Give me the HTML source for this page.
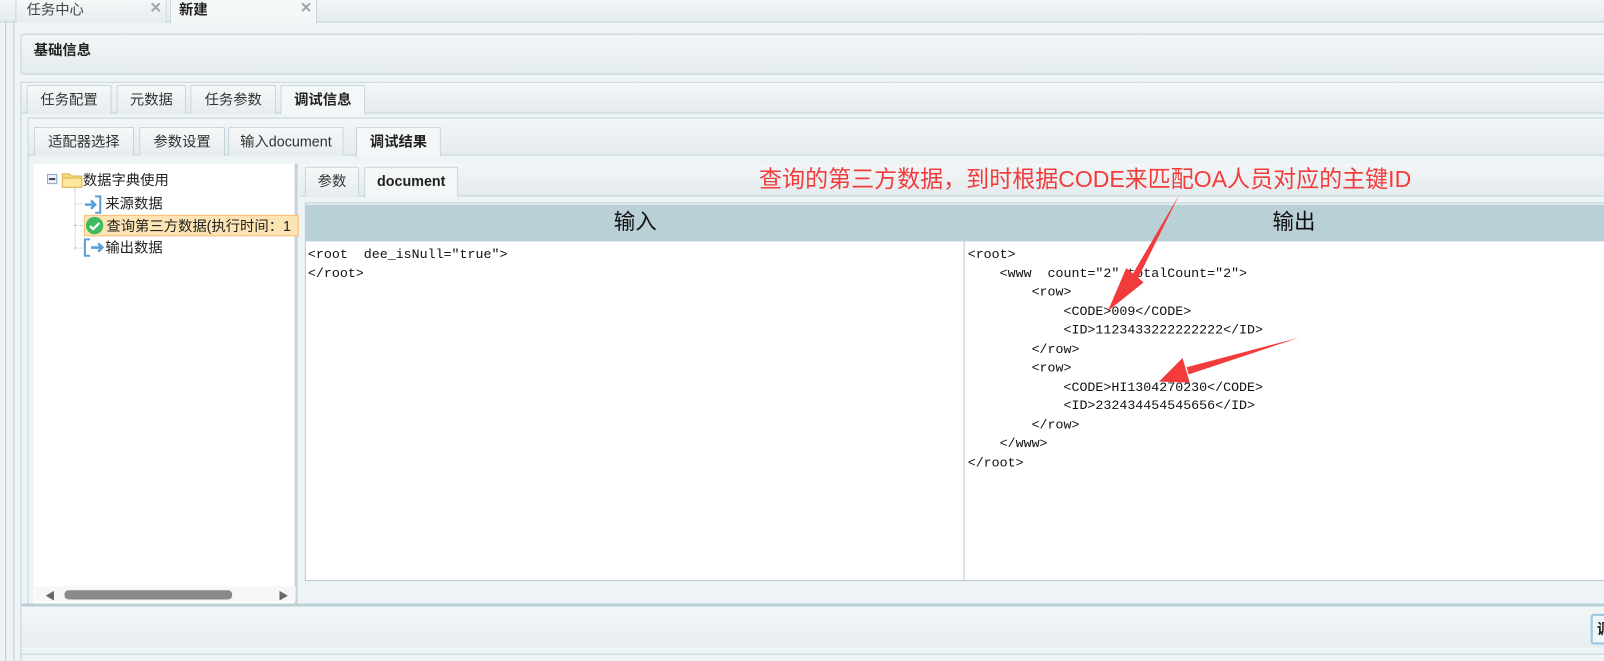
<!DOCTYPE html>
<html><head><meta charset="utf-8">
<style>
*{margin:0;padding:0;box-sizing:border-box}
body{width:1604px;height:646px;overflow:hidden;background:#eef3f5;font-family:"Liberation Sans","Noto Sans CJK SC",sans-serif;font-size:14px;color:#222;position:relative}
#w{position:absolute;left:0;top:0;width:1568px;height:632px;transform:scale(1.02296);transform-origin:0 0}
.abs{position:absolute}
.grad{background:linear-gradient(#f3f6f7,#e4ebee)}
.tab{position:absolute;border:1px solid #c3d3d9;border-bottom:none;background:linear-gradient(#f6f8f9,#e6ecef);font-size:14px;color:#333;text-align:center;border-radius:2px 2px 0 0}
.tab.act{background:#f4f7f8;font-weight:bold;color:#222}
.mono{font-family:"Liberation Mono","Noto Sans CJK SC",monospace;font-size:13px;line-height:18.5px;white-space:pre;color:#111}
</style></head><body><div id="w">
<div class="abs" style="left:0;top:0;width:1604px;height:646px;background:#eef3f5"></div>
<div class="abs grad" style="left:0;top:0;width:1604px;height:22px;border-bottom:1px solid #c3d3d9"></div>
<div class="tab" style="left:15px;top:-2px;width:148px;height:24px;line-height:20px;text-align:left;padding-left:10px;color:#444">任务中心<span class="abs" style="right:4px;top:-2px;color:#9aa7ad;font-size:14px;font-weight:bold">✕</span></div>
<div class="tab act" style="left:166px;top:-2px;width:144px;height:25px;line-height:20px;text-align:left;padding-left:8px;background:#f4f7f8">新建<span class="abs" style="right:4px;top:-2px;color:#9aa7ad;font-size:14px;font-weight:bold">✕</span></div>
<div class="abs" style="left:5px;top:22px;width:1px;height:624px;background:#bcd0d7"></div>
<div class="abs" style="left:13px;top:22px;width:1px;height:624px;background:#bcd0d7"></div>
<div class="abs" style="left:20px;top:80px;width:1px;height:566px;background:#bcd0d7"></div>
<div class="abs grad" style="left:20px;top:33px;width:1590px;height:40px;border:1px solid #c3d3d9;border-radius:3px;font-weight:bold;font-size:14px;line-height:30px;padding-left:12px">基础信息</div>
<div class="abs" style="left:20px;top:80px;width:1590px;height:560px;border:1px solid #c3d3d9;background:#eef3f5"></div>
<div class="abs grad" style="left:21px;top:81px;width:1590px;height:30px;border-bottom:1px solid #c3d3d9"></div>
<div class="tab" style="left:26px;top:83px;width:83px;height:28px;line-height:27px">任务配置</div>
<div class="tab" style="left:114px;top:83px;width:68px;height:28px;line-height:27px">元数据</div>
<div class="tab" style="left:186px;top:83px;width:84px;height:28px;line-height:27px">任务参数</div>
<div class="tab act" style="left:274px;top:83px;width:83px;height:29px;line-height:27px">调试信息</div>
<div class="abs" style="left:27px;top:115px;width:1580px;height:480px;border:1px solid #c3d3d9;background:#eef3f5"></div>
<div class="abs grad" style="left:28px;top:116px;width:1580px;height:36px;border-bottom:1px solid #c3d3d9"></div>
<div class="tab" style="left:33px;top:124px;width:98px;height:28px;line-height:26px">适配器选择</div>
<div class="tab" style="left:136px;top:124px;width:84px;height:28px;line-height:26px">参数设置</div>
<div class="tab" style="left:223px;top:124px;width:113px;height:28px;line-height:26px">输入document</div>
<div class="tab act" style="left:348px;top:124px;width:83px;height:29px;line-height:26px">调试结果</div>
<div class="abs" style="left:33px;top:160px;width:258px;height:430px;background:#fff;border-right:3px solid #c3d3d9"></div>
<div class="abs" style="left:34px;top:573px;width:255px;height:15px;background:#f7f7f7"></div>
<div class="abs" style="left:63px;top:577px;width:164px;height:9px;background:#8a8a8a;border-radius:4px"></div>
<div class="abs" style="left:44px;top:574px;font-size:10px;color:#666">◀</div>
<div class="abs" style="left:272px;top:574px;font-size:10px;color:#666">▶</div>
<div class="abs" style="left:46px;top:170px;width:10px;height:10px;border:1px solid #8ea6b8;background:#eef2f6"></div>
<div class="abs" style="left:48px;top:174px;width:6px;height:2px;background:#445"></div>
<svg class="abs" style="left:60px;top:167px" width="22" height="17"><path d="M1 3h7l2 2h10v11H1z" fill="#f7dc7a" stroke="#d8b550"/><path d="M1 7h19v9H1z" fill="#fbe9a0" stroke="#d8b550"/></svg>
<div class="abs" style="left:81px;top:166px;font-size:14px">数据字典使用</div>
<div class="abs" style="left:73px;top:184px;width:1px;height:60px;border-left:1px dotted #bbb"></div>
<div class="abs" style="left:73px;top:199px;width:8px;border-top:1px dotted #bbb"></div>
<div class="abs" style="left:73px;top:220px;width:8px;border-top:1px dotted #bbb"></div>
<div class="abs" style="left:73px;top:242px;width:8px;border-top:1px dotted #bbb"></div>
<svg class="abs" style="left:81px;top:190px" width="20" height="20"><path d="M12 2h5v16h-5" fill="none" stroke="#5a9fd8" stroke-width="2"/><path d="M2 10h9M8 6l4 4-4 4" fill="none" stroke="#5a9fd8" stroke-width="2.5"/></svg>
<div class="abs" style="left:103px;top:189px">来源数据</div>
<div class="abs" style="left:82px;top:210px;width:210px;height:21px;background:#fde4b4;border:1px solid #f5be74"></div>
<svg class="abs" style="left:83px;top:211px" width="19" height="19"><circle cx="9.5" cy="9.5" r="8.5" fill="#3dbb5e"/><path d="M5 10l3 3 6-6" fill="none" stroke="#fff" stroke-width="2.2"/></svg>
<div class="abs" style="left:104px;top:211px;white-space:nowrap;width:186px;overflow:hidden">查询第三方数据(执行时间：1</div>
<svg class="abs" style="left:81px;top:232px" width="22" height="20"><path d="M7 2H2v16h5" fill="none" stroke="#5a9fd8" stroke-width="2"/><path d="M8 10h10M15 6l4 4-4 4" fill="none" stroke="#5a9fd8" stroke-width="2.5"/></svg>
<div class="abs" style="left:103px;top:232px">输出数据</div>
<div class="abs grad" style="left:293px;top:160px;width:1320px;height:32px;border-bottom:1px solid #c3d3d9"></div>
<div class="tab" style="left:298px;top:163px;width:53px;height:29px;line-height:27px">参数</div>
<div class="tab act" style="left:356px;top:163px;width:92px;height:30px;line-height:27px">document</div>
<div class="abs" style="left:298px;top:198px;width:1310px;height:370px;border:1px solid #b6cbd2;background:#fff"></div>
<div class="abs" style="left:299px;top:200px;width:1310px;height:36px;background:#b9d0d6"></div>
<div class="abs" style="left:299px;top:200px;width:644px;height:36px;line-height:36px;text-align:center;font-size:21px;color:#111">输入</div>
<div class="abs" style="left:943px;top:200px;width:644px;height:36px;line-height:36px;text-align:center;font-size:21px;color:#111">输出</div>
<div class="abs" style="left:942px;top:236px;width:1px;height:331px;background:#b6cbd2"></div>
<div class="abs mono" style="left:301px;top:240px">&lt;root  dee_isNull="true"&gt;
&lt;/root&gt;</div>
<div class="abs mono" style="left:946px;top:240px">&lt;root&gt;
    &lt;www  count="2" totalCount="2"&gt;
        &lt;row&gt;
            &lt;CODE&gt;009&lt;/CODE&gt;
            &lt;ID&gt;1123433222222222&lt;/ID&gt;
        &lt;/row&gt;
        &lt;row&gt;
            &lt;CODE&gt;HI1304270230&lt;/CODE&gt;
            &lt;ID&gt;232434454545656&lt;/ID&gt;
        &lt;/row&gt;
    &lt;/www&gt;
&lt;/root&gt;</div>
<div class="abs" style="left:21px;top:590px;width:1590px;height:3px;background:#b9d0d6"></div>
<div class="abs" style="left:21px;top:593px;width:1590px;height:40px;background:linear-gradient(#f2f6f7,#e8eef1)"></div>
<div class="abs" style="left:1555px;top:600px;width:60px;height:30px;border:2px solid #9cc6de;border-radius:3px;background:#eef6fa;font-weight:bold;font-size:14px;line-height:26px;padding-left:4px">调</div>
<div class="abs" style="left:742px;top:158px;font-size:22.5px;color:#f23b3b;white-space:nowrap">查询的第三方数据，到时根据CODE来匹配OA人员对应的主键ID</div>
<svg class="abs" style="left:0;top:0" width="1604" height="646">
<path d="M1153 190 L1106 270 L1112 273 Z" fill="#f23b3b"/>
<path d="M1101 262 L1118 276 L1083 304 Z" fill="#f23b3b"/>
<path d="M1270 330 L1160 359 L1162 366 Z" fill="#f23b3b"/>
<path d="M1156 350 L1163 374 L1133 373 Z" fill="#f23b3b"/>
</svg>
</div></body></html>
